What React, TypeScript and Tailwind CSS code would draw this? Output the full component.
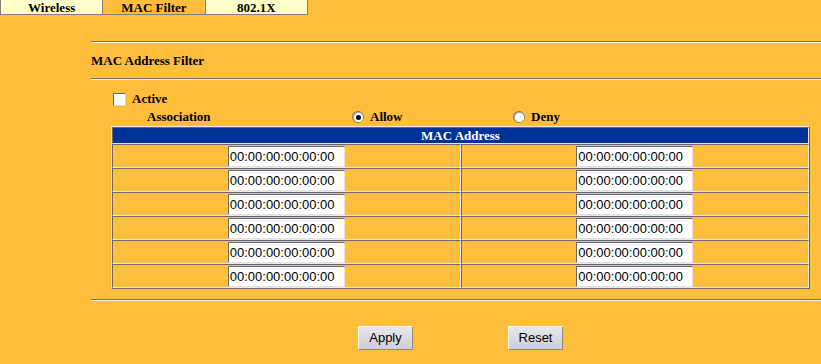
import React, { useState } from 'react';

const tabs = ['Wireless', 'MAC Filter', '802.1X'];

const Hr: React.FC = () => (
  <div className="h-[2px] border-t border-[#707070] bg-[#f0f0f0]" />
);

const MacInput: React.FC = () => (
  <input
    type="text"
    defaultValue="00:00:00:00:00:00"
    className="w-[117px] h-[21px] bg-white px-[1px] text-[13px] leading-none text-black font-['Liberation_Sans',Arial,sans-serif] border border-t-[#6a6a6a] border-l-[#6a6a6a] border-b-[#e4e4e4] border-r-[#e4e4e4] outline-none"
  />
);

const Radio: React.FC<{ checked: boolean; onClick: () => void }> = ({ checked, onClick }) => (
  <span
    onClick={onClick}
    className="inline-flex items-center justify-center w-[12px] h-[12px] rounded-full border border-[#7a7a7a] bg-gradient-to-br from-[#9a9a9a] to-[#f4f4f4] cursor-pointer"
  >
    <span className="w-[9px] h-[9px] rounded-full bg-white flex items-center justify-center">
      {checked && <span className="w-[5px] h-[5px] rounded-full bg-black" />}
    </span>
  </span>
);

const Button: React.FC<{ label: string }> = ({ label }) => (
  <button className="w-[55px] h-[24px] text-[13px] text-black font-['Liberation_Sans',Arial,sans-serif] bg-gradient-to-b from-[#e8e8ec] to-[#cdcdd3] border border-t-[#f6f6f6] border-l-[#f6f6f6] border-b-[#8a8a8a] border-r-[#8a8a8a]">
    {label}
  </button>
);

export default function App() {
  const [active, setActive] = useState(false);
  const [assoc, setAssoc] = useState<'allow' | 'deny'>('allow');

  return (
    <div className="w-[821px] h-[364px] overflow-hidden bg-[#ffbd3c] font-['Liberation_Serif','Times_New_Roman',serif] text-black">
      {/* tab strip */}
      <div className="flex w-[308px] h-[15px] border-l border-b border-[#808080]">
        {tabs.map((t) => (
          <div
            key={t}
            className={`flex-1 flex items-center justify-center border-r border-[#808080] text-[13px] font-bold leading-none ${
              t === 'MAC Filter' ? 'bg-[#ffbd3c]' : 'bg-[#ffffcc]'
            }`}
          >
            {t}
          </div>
        ))}
      </div>

      <div className="pl-[91px] pt-[26px]">
        <Hr />
        <div className="h-[35px] flex items-center text-[13px] font-bold">MAC Address Filter</div>
        <Hr />

        <div className="pl-[22px] pt-[10px]">
          <div className="h-[18px] flex items-center gap-[6px] text-[13px] font-bold">
            <span
              onClick={() => setActive(!active)}
              className="w-[13px] h-[13px] bg-white border border-t-[#6a6a6a] border-l-[#6a6a6a] border-b-[#d8d8d8] border-r-[#d8d8d8] cursor-pointer flex items-center justify-center text-[10px]"
            >
              {active ? '✓' : ''}
            </span>
            <span>Active</span>
          </div>
          <div className="h-[18px] flex items-center text-[13px] font-bold">
            <span className="ml-[34px] w-[205px]">Association</span>
            <span className="w-[161px] flex items-center gap-[6px]">
              <Radio checked={assoc === 'allow'} onClick={() => setAssoc('allow')} />
              Allow
            </span>
            <span className="flex items-center gap-[6px]">
              <Radio checked={assoc === 'deny'} onClick={() => setAssoc('deny')} />
              Deny
            </span>
          </div>
        </div>

        {/* MAC table */}
        <div className="ml-[20px] w-[699px] border border-t-[#e8e8e8] border-l-[#e8e8e8] border-b-[#6a6a6a] border-r-[#6a6a6a]">
          <div className="h-[17px] border border-t-[#6a6a6a] border-l-[#6a6a6a] border-b-[#e8e8e8] border-r-[#e8e8e8] bg-[#003399] text-white text-[13px] font-bold flex items-center justify-center leading-none">
            MAC Address
          </div>
          {Array.from({ length: 6 }).map((_, r) => (
            <div key={r} className="grid grid-cols-2 h-[24px]">
              {[0, 1].map((c) => (
                <div
                  key={c}
                  className="flex items-center justify-center border border-t-[#6a6a6a] border-l-[#6a6a6a] border-b-[#e8e8e8] border-r-[#e8e8e8]"
                >
                  <MacInput />
                </div>
              ))}
            </div>
          ))}
        </div>

        <div className="mt-[10px]">
          <Hr />
        </div>

        <div className="flex pt-[25px] pl-[267px] gap-[95px]">
          <Button label="Apply" />
          <Button label="Reset" />
        </div>
      </div>
    </div>
  );
}
